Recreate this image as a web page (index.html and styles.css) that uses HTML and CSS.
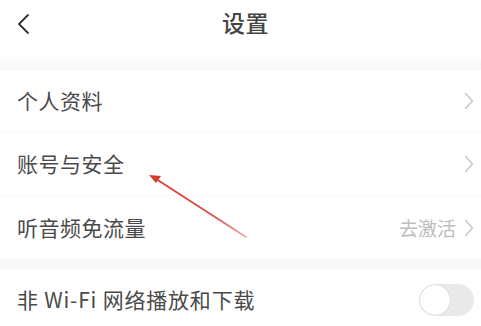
FILE: index.html
```html
<!DOCTYPE html>
<html lang="zh">
<head>
<meta charset="utf-8">
<link rel="stylesheet" href="styles.css">
</head>
<body>
<div class="page">
  <header class="topbar">
    <svg class="back" width="14" height="22" viewBox="0 0 14 22"><path d="M12 2 L3 11 L12 20" fill="none" stroke="#333" stroke-width="1.8" stroke-linecap="round" stroke-linejoin="round"/></svg>
    <h1 class="title">设置</h1>
  </header>
  <div class="gap"></div>
  <section class="group">
    <div class="row">
      <span class="label">个人资料</span>
      <span class="right"><svg class="chev" width="10" height="18" viewBox="0 0 10 18"><path d="M1.5 1.5 L8.5 9 L1.5 16.5" fill="none" stroke="#c8c8c8" stroke-width="1.6" stroke-linecap="round" stroke-linejoin="round"/></svg></span>
    </div>
    <div class="row">
      <span class="label">账号与安全</span>
      <span class="right"><svg class="chev" width="10" height="18" viewBox="0 0 10 18"><path d="M1.5 1.5 L8.5 9 L1.5 16.5" fill="none" stroke="#c8c8c8" stroke-width="1.6" stroke-linecap="round" stroke-linejoin="round"/></svg></span>
    </div>
    <div class="row last">
      <span class="label">听音频免流量</span>
      <span class="right"><span class="value">去激活</span><svg class="chev" width="10" height="18" viewBox="0 0 10 18"><path d="M1.5 1.5 L8.5 9 L1.5 16.5" fill="none" stroke="#c8c8c8" stroke-width="1.6" stroke-linecap="round" stroke-linejoin="round"/></svg></span>
    </div>
  </section>
  <div class="gap small"></div>
  <section class="group">
    <div class="row">
      <span class="label wide">非 Wi-Fi 网络播放和下载</span>
      <span class="toggle"><span class="knob"></span></span>
    </div>
  </section>
  <svg class="arrow" width="481" height="326" viewBox="0 0 481 326">
    <defs>
      <linearGradient id="ag" x1="150" y1="176" x2="246" y2="237" gradientUnits="userSpaceOnUse">
        <stop offset="0" stop-color="#d9382c"/>
        <stop offset="0.7" stop-color="#d9544a"/>
        <stop offset="1" stop-color="#e8b0aa"/>
      </linearGradient>
    </defs>
    <path d="M246 237 L153 177" stroke="url(#ag)" stroke-width="1.8" fill="none" stroke-linecap="round"/>
    <path d="M149 175 L161 176 L156 183 Z" fill="#d9382c"/>
  </svg>
</div>
</body>
</html>
```
FILE: styles.css
```css
* { box-sizing: border-box; }
html, body { margin: 0; padding: 0; background: #fff; }
body {
  font-family: "Noto Sans CJK SC", "Noto Sans", sans-serif;
  color: #444;
  width: 481px;
  height: 326px;
  overflow: hidden;
}
.page { position: relative; width: 481px; height: 326px; }
.topbar {
  height: 58px;
  display: flex;
  align-items: center;
  justify-content: center;
  position: relative;
}
.back { position: absolute; left: 16px; top: 13px; }
.title {
  margin: 0;
  font-size: 23px;
  font-weight: 500;
  color: #444;
  line-height: 1;
  margin-top: -14px;
  margin-left: 10px;
  letter-spacing: 0.5px;
}
.gap {
  height: 12px;
  background: linear-gradient(#fcfcfc, #f6f6f6);
}
.gap.small { height: 10px; background: #f8f8f8; }
.group { background: #fff; }
.row {
  height: 63px;
  display: flex;
  align-items: center;
  justify-content: space-between;
  padding: 0 7px 0 17px;
  border-bottom: 1px solid #f7f7f7;
}
.row.last { border-bottom: none; }
.label { font-size: 21px; color: #4a4a4a; letter-spacing: 0.5px; margin-top: -2px; }
.label.wide { letter-spacing: 0.8px; }
.right { display: flex; align-items: center; gap: 8px; }
.value { font-size: 19px; color: #bdbdbd; }
.chev { display: block; }
.toggle {
  width: 55px;
  height: 32px;
  border-radius: 16px;
  background: #e9e9e9;
  position: relative;
}
.knob {
  position: absolute;
  left: 1px;
  top: 1px;
  width: 30px;
  height: 30px;
  border-radius: 50%;
  background: #fff;
  box-shadow: 0 0 1px rgba(0,0,0,0.25);
}
.arrow { position: absolute; left: 0; top: 0; pointer-events: none; }
```
